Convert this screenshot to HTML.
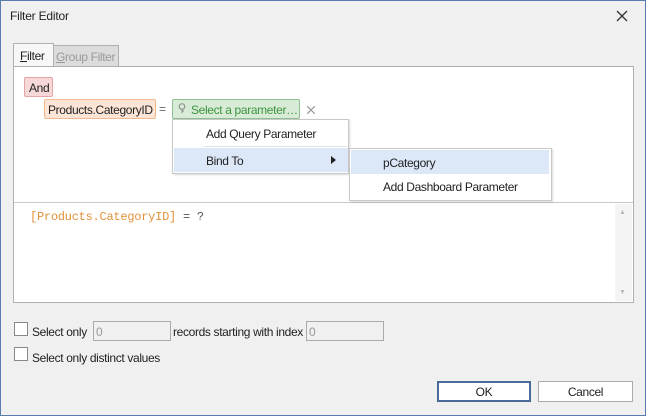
<!DOCTYPE html>
<html><head><style>
body{margin:0;width:646px;height:416px;overflow:hidden;font-family:"Liberation Sans",sans-serif;font-size:12px;letter-spacing:-0.35px;color:#222;}
#win{position:absolute;left:0;top:0;width:644px;height:414px;border:1px solid #5a7bb0;background:#f0f0f0;}
.a{position:absolute;white-space:nowrap;}
</style></head><body>
<div id="win"></div>
<div class="a" style="left:10px;top:9px;letter-spacing:-0.2px;">Filter Editor</div>
<svg class="a" style="left:616px;top:10px" width="12" height="12"><path d="M1 1L11 11M11 1L1 11" stroke="#333" stroke-width="1.3"/></svg>
<!-- tabs -->
<div class="a" style="left:52px;top:45px;width:65px;height:21px;background:#dcdcdc;border:1px solid #b0b0b0;border-bottom:none;"></div>
<div class="a" style="left:56px;top:50px;color:#999;"><u>G</u>roup Filter</div>
<div class="a" style="left:13px;top:43px;width:39px;height:24px;background:#f7f7f7;border:1px solid #b0b0b0;border-bottom:none;"></div>
<div class="a" style="left:20px;top:49px;"><u>F</u>ilter</div>
<!-- panel -->
<div class="a" style="left:13px;top:66px;width:619px;height:235px;background:#fff;border:1px solid #b0b0b0;"></div>
<div class="a" style="left:14px;top:202px;width:619px;height:1px;background:#c8c8c8;"></div>
<div class="a" style="left:615px;top:204px;width:17px;height:97px;background:#f4f4f4;"></div>
<div class="a" style="left:619px;top:209px;font-size:7px;color:#bbb;">▲</div>
<div class="a" style="left:619px;top:289px;font-size:7px;color:#bbb;">▼</div>
<div class="a" style="left:30px;top:210px;font-family:'Liberation Mono',monospace;font-size:12px;letter-spacing:-0.25px;color:#e2913a;">[Products.CategoryID] <span style="color:#555">= ?</span></div>
<!-- badges -->
<div class="a" style="left:24px;top:77px;width:27px;height:18px;background:#f6d8d8;border:1px solid #e3a5a5;border-radius:2px;"></div>
<div class="a" style="left:29px;top:81px;">And</div>
<div class="a" style="left:44px;top:99px;width:110px;height:18px;background:#fce5d6;border:1px solid #f2b98f;border-radius:2px;"></div>
<div class="a" style="left:48px;top:103px;">Products.CategoryID</div>
<div class="a" style="left:159px;top:102px;color:#666;">=</div>
<div class="a" style="left:172px;top:99px;width:126px;height:18px;background:#d7ebd7;border:1px solid #8fc08f;border-radius:2px;"></div>
<svg class="a" style="left:178px;top:103px" width="8" height="11"><circle cx="4" cy="3.5" r="2.8" fill="none" stroke="#888"/><path d="M4 6.5V10M4 8H6" stroke="#888"/></svg>
<div class="a" style="left:191px;top:103px;color:#3d9440;">Select a parameter…</div>
<svg class="a" style="left:307px;top:106px" width="8" height="8"><path d="M0 0L8 8M8 0L0 8" stroke="#999" stroke-width="1.2"/></svg>
<!-- menu 1 -->
<div class="a" style="left:172px;top:119px;width:175px;height:53px;background:#fff;border:1px solid #c8c8c8;box-shadow:1px 1px 2px rgba(0,0,0,.15);"></div>
<div class="a" style="left:206px;top:127px;">Add Query Parameter</div>
<div class="a" style="left:204px;top:146px;width:143px;height:1px;background:#e0e0e0;"></div>
<div class="a" style="left:174px;top:148px;width:174px;height:24px;background:#dce8f8;"></div>
<div class="a" style="left:206px;top:154px;">Bind To</div>
<svg class="a" style="left:331px;top:156px" width="5" height="8"><path d="M0 0L5 4L0 8Z" fill="#222"/></svg>
<!-- submenu -->
<div class="a" style="left:349px;top:148px;width:201px;height:51px;background:#fff;border:1px solid #c8c8c8;box-shadow:1px 1px 2px rgba(0,0,0,.15);"></div>
<div class="a" style="left:351px;top:150px;width:198px;height:24px;background:#dce8f8;"></div>
<div class="a" style="left:383px;top:156px;">pCategory</div>
<div class="a" style="left:383px;top:180px;">Add Dashboard Parameter</div>
<!-- bottom -->
<div class="a" style="left:14px;top:322px;width:12px;height:12px;background:#fff;border:1px solid #888;"></div>
<div class="a" style="left:32px;top:325px;">Select only</div>
<div class="a" style="left:93px;top:321px;width:76px;height:18px;background:#f0f0f0;border:1px solid #aaa;"></div>
<div class="a" style="left:96px;top:325px;color:#999;">0</div>
<div class="a" style="left:173px;top:325px;">records starting with index</div>
<div class="a" style="left:306px;top:321px;width:76px;height:18px;background:#f0f0f0;border:1px solid #aaa;"></div>
<div class="a" style="left:309px;top:325px;color:#999;">0</div>
<div class="a" style="left:14px;top:347px;width:12px;height:12px;background:#fff;border:1px solid #888;"></div>
<div class="a" style="left:32px;top:351px;">Select only distinct values</div>
<div class="a" style="left:437px;top:381px;width:90px;height:17px;background:#fff;border:2px solid #4a6a9c;text-align:center;line-height:18px;">OK</div>
<div class="a" style="left:538px;top:381px;width:93px;height:19px;background:#fff;border:1px solid #aaa;text-align:center;line-height:20px;">Cancel</div>
</body></html>
